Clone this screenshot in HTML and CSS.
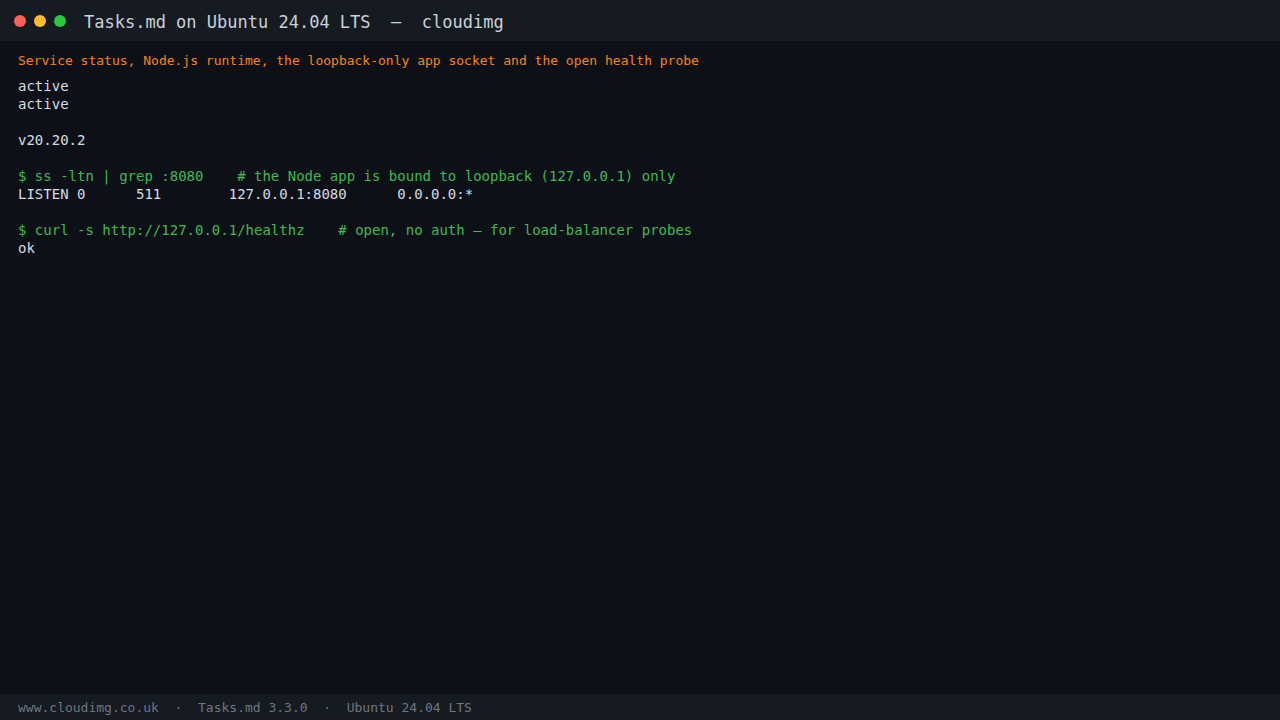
FILE: index.html
```html
<!DOCTYPE html>
<html lang="en">
<head>
<meta charset="utf-8">
<title>Tasks.md on Ubuntu 24.04 LTS — cloudimg</title>
<link rel="stylesheet" href="styles.css">
</head>
<body>
<div class="window">
  <header class="titlebar">
    <div class="lights">
      <span class="light red"></span>
      <span class="light yellow"></span>
      <span class="light green"></span>
    </div>
    <div class="title">Tasks.md on Ubuntu 24.04 LTS  —  cloudimg</div>
  </header>
  <main class="terminal">
    <div class="caption">Service status, Node.js runtime, the loopback-only app socket and the open health probe</div>
<pre class="output"><span class="out">active
active

v20.20.2

</span><span class="cmd">$ ss -ltn | grep :8080    # the Node app is bound to loopback (127.0.0.1) only</span>
<span class="out">LISTEN 0      511        127.0.0.1:8080      0.0.0.0:*

</span><span class="cmd">$ curl -s http://127.0.0.1/healthz    # open, no auth — for load-balancer probes</span>
<span class="out">ok</span></pre>
  </main>
  <footer class="statusbar">www.cloudimg.co.uk  ·  Tasks.md 3.3.0  ·  Ubuntu 24.04 LTS</footer>
</div>
</body>
</html>
```

FILE: styles.css
```css
html, body {
  margin: 0;
  padding: 0;
  height: 100%;
}
body {
  background: #0d1117;
  font-family: "DejaVu Sans Mono", "Liberation Mono", monospace;
  color: #d6dce3;
}
.window {
  display: flex;
  flex-direction: column;
  height: 100vh;
}
.titlebar {
  height: 41px;
  background: #161b22;
  display: flex;
  align-items: center;
  padding: 0 14px;
  gap: 18px;
  flex: none;
}
.lights {
  display: flex;
  gap: 8px;
}
.light {
  width: 12px;
  height: 12px;
  border-radius: 50%;
  display: block;
}
.red { background: #ff5f57; }
.yellow { background: #febc2e; }
.green { background: #28c840; }
.title {
  font-size: 17px;
  color: #c9d1d9;
  white-space: pre;
  padding-top: 2px;
}
.terminal {
  flex: 1;
  padding: 11px 18px 0;
}
.caption {
  font-size: 13px;
  line-height: 18px;
  color: #f7821b;
  white-space: pre;
}
.output {
  margin: 7px 0 0;
  font-family: inherit;
  font-size: 14px;
  line-height: 18px;
  white-space: pre;
}
.out { color: #d6dce3; }
.cmd { color: #3fb950; }
.statusbar {
  flex: none;
  height: 26px;
  box-sizing: border-box;
  background: #161b22;
  color: #6e7681;
  font-size: 13px;
  line-height: 26px;
  padding: 1px 18px 0;
  white-space: pre;
}
```
